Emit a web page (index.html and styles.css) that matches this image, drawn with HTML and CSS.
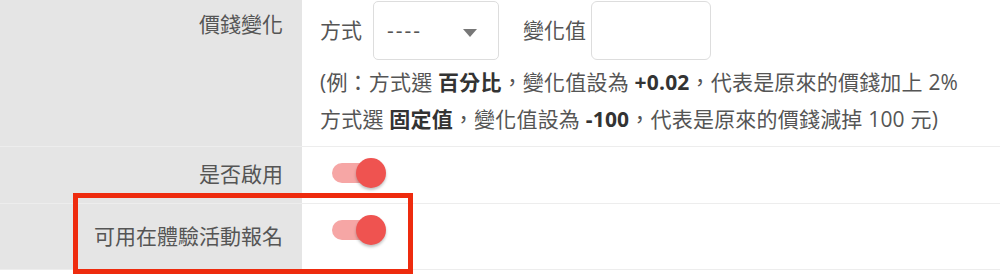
FILE: index.html
```html
<html>
<head>
<meta charset="utf-8">
<link rel="stylesheet" href="styles.css">
</head>
<body>
<div id="form">
	<div class="row row-price">
		<div class="fieldLabel">價錢變化</div>
		<div class="fieldBody">
			<div class="inline">
				<span class="inlineLabel">方式</span>
				<div class="selectBox"><span class="dashes">----</span><i class="caret"></i></div>
				<span class="inlineLabel second">變化值</span>
				<input class="valueInput" type="text">
			</div>
			<div class="hint">
				(例：方式選 <b>百分比</b>，變化值設為 <b>+0.02</b>，代表是原來的價錢加上 2%<br>
				方式選 <b>固定值</b>，變化值設為 <b>-100</b>，代表是原來的價錢減掉 100 元)
			</div>
		</div>
	</div>
	<div class="row row-enable">
		<div class="fieldLabel">是否啟用</div>
		<div class="fieldBody">
			<label class="switch"><span class="track"></span><span class="knob"></span></label>
		</div>
	</div>
	<div class="row row-trial">
		<div class="fieldLabel">可用在體驗活動報名</div>
		<div class="fieldBody">
			<label class="switch"><span class="track"></span><span class="knob"></span></label>
		</div>
	</div>
	<div class="highlight"></div>
</div>
</body>
</html>
```

FILE: styles.css
```css
body {
    margin: 0;
    font-family: "Open Sans", "Noto Sans CJK TC", sans-serif;
    font-size: 21px;
    line-height: 37px;
    color: #555555;
    background: #ffffff;
}
#form {
    position: relative;
}
.row {
    display: flex;
    border-bottom: 1px solid #ededed;
}
.fieldLabel {
    width: 283px;
    flex: none;
    background-color: #e5e5e5;
    text-align: right;
    padding-right: 19px;
}
.fieldBody {
    flex: 1;
    padding-left: 18px;
}
.row-price .fieldLabel {
    padding-top: 6px;
}
.row-price .fieldBody {
    padding-top: 1px;
    padding-bottom: 8px;
}
.inline {
    display: flex;
    align-items: center;
}
.inlineLabel {
    margin-right: 11px;
}
.inlineLabel.second {
    margin-left: 24px;
    margin-right: 5px;
}
.selectBox {
    box-sizing: border-box;
    width: 126px;
    height: 59px;
    border: 1px solid #dddddd;
    border-radius: 5px;
    padding-left: 13px;
    display: flex;
    align-items: center;
    position: relative;
    color: #555555;
}
.selectBox .dashes {
    letter-spacing: 2px;
}
.caret {
    position: absolute;
    left: 89px;
    top: 27px;
    width: 0;
    height: 0;
    border-left: 7px solid transparent;
    border-right: 7px solid transparent;
    border-top: 8px solid #777777;
}
.valueInput {
    box-sizing: border-box;
    width: 120px;
    height: 59px;
    margin: 0;
    border: 1px solid #dddddd;
    border-radius: 6px;
}
.hint {
    margin-top: 4px;
    letter-spacing: 0.2px;
}
.hint b {
    color: #333333;
}
.row-enable .fieldLabel {
    padding-top: 9px;
    padding-bottom: 10px;
}
.row-enable .fieldBody {
    display: flex;
    align-items: center;
    padding-bottom: 4px;
}
.row-trial .fieldLabel {
    padding-top: 14px;
    padding-bottom: 14px;
}
.row-trial .fieldBody {
    padding-top: 11px;
}
.switch {
    display: block;
    position: relative;
    width: 54px;
    height: 30px;
    margin-left: 12px;
}
.switch .track {
    position: absolute;
    left: 0;
    top: 5px;
    width: 44px;
    height: 20px;
    border-radius: 10px;
    background-color: #f6a6a5;
}
.switch .knob {
    position: absolute;
    left: 24px;
    top: 0;
    width: 30px;
    height: 30px;
    border-radius: 50%;
    background-color: #ef5350;
    box-shadow: 0 2px 3px rgba(0, 0, 0, 0.25);
}
.highlight {
    position: absolute;
    left: 73px;
    top: 193px;
    width: 330px;
    height: 71px;
    border: 5px solid #ee2b0e;
}
```
